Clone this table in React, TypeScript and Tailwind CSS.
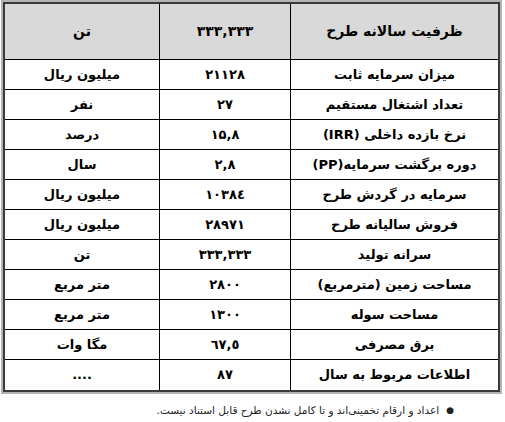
import React from "react";

type Row = { label: string; value: string; unit: string; h: string };

const rows: Row[] = [
  { label: "میزان سرمایه ثابت", value: "۲۱۱۲۸", unit: "میلیون ریال", h: "h-[30px]" },
  { label: "تعداد اشتغال مستقیم", value: "۲۷", unit: "نفر", h: "h-[30px]" },
  { label: "نرخ بازده داخلی (IRR)", value: "۱۵,۸", unit: "درصد", h: "h-[30px]" },
  { label: "دوره برگشت سرمایه(PP)", value: "۲,۸", unit: "سال", h: "h-[30px]" },
  { label: "سرمایه در گردش طرح", value: "۱۰۳۸٤", unit: "میلیون ریال", h: "h-[30px]" },
  { label: "فروش سالیانه طرح", value: "۲۸۹۷۱", unit: "میلیون ریال", h: "h-[30px]" },
  { label: "سرانه تولید", value: "۳۳۳,۳۳۳", unit: "تن", h: "h-[30px]" },
  { label: "مساحت زمین (مترمربع)", value: "۲۸۰۰", unit: "متر مربع", h: "h-[30px]" },
  { label: "مساحت سوله", value: "۱۳۰۰", unit: "متر مربع", h: "h-[30px]" },
  { label: "برق مصرفی", value: "٦٧,٥", unit: "مگا وات", h: "h-[30px]" },
  { label: "اطلاعات مربوط به سال", value: "۸۷", unit: "....", h: "h-[31px]" },
];

export default function App() {
  return (
    <div
      className="w-[505px] h-[422px] bg-white text-black"
      style={{ fontFamily: '"DejaVu Sans", "Noto Sans", sans-serif' }}
    >
      <div className="ml-[1px] w-[501px] border-2 border-[#b4b4b4]">
        <div dir="rtl" className="border-2 border-[#3a3a3a] font-bold">
          <div className="grid grid-cols-[208px_131px_154px] h-[55px] bg-[#d9d9d9] text-[14px]">
            <div className="flex items-center justify-center border-l border-black">ظرفیت سالانه طرح</div>
            <div className="flex items-center justify-center border-l border-black">۳۳۳,۳۳۳</div>
            <div className="flex items-center justify-center">تن</div>
          </div>
          {rows.map((r, i) => (
            <div
              key={i}
              className={`grid grid-cols-[208px_131px_154px] border-t border-black text-[13px] ${r.h}`}
            >
              <div className="flex items-center justify-center border-l border-black">{r.label}</div>
              <div className="flex items-center justify-center border-l border-black">{r.value}</div>
              <div className="flex items-center justify-center">{r.unit}</div>
            </div>
          ))}
        </div>
      </div>
      <div dir="rtl" className="flex items-center pr-[51px] mt-[9px] text-[10.5px] text-[#222]">
        <span className="text-[9px] ml-[7px]">●</span>
        <span>اعداد و ارقام تخمینی‌اند و تا کامل نشدن طرح قابل استناد نیست.</span>
      </div>
    </div>
  );
}
